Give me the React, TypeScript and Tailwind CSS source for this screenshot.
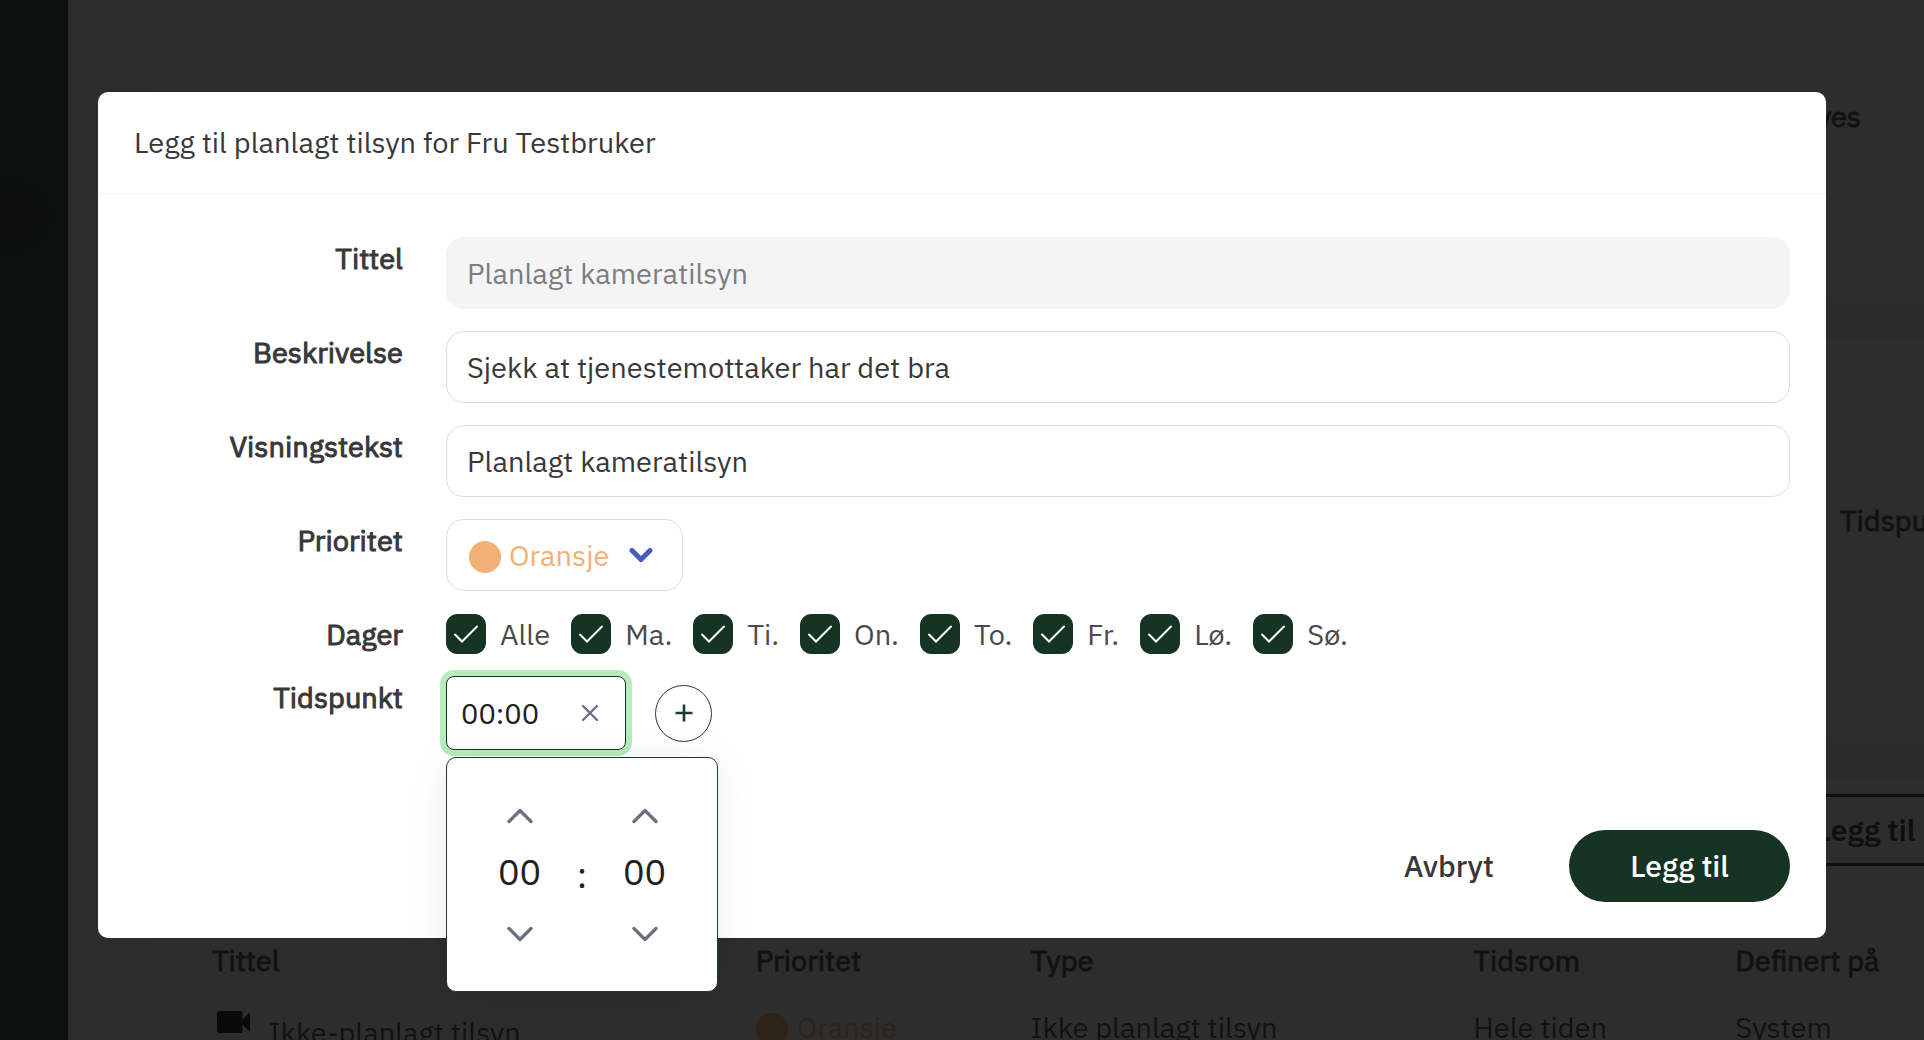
import { useState } from 'react';

interface Priority {
  name: string;
}

const PRIORITIES: Priority[] = [{ name: 'Oransje' }, { name: 'Rød' }, { name: 'Gul' }];
const DAYS = ['Alle', 'Ma.', 'Ti.', 'On.', 'To.', 'Fr.', 'Lø.', 'Sø.'];

const INPUT = 'block h-[72px] w-full rounded-[18px] px-5 text-[29px] outline-none';

// Thickened regular weight, keeps the regular letter widths.
const BOLD = 'font-normal [-webkit-text-stroke:1px_currentColor]';

function Chevron({ up = false }: { up?: boolean }) {
  return (
    <svg width="26" height="16" viewBox="0 0 26 16" fill="none" stroke="#6b7080" strokeWidth="3.3" strokeLinecap="round" strokeLinejoin="round" aria-hidden>
      <path d={up ? 'M2 13.5 13 2.5l11 11' : 'M2 2.5 13 13.5 24 2.5'} />
    </svg>
  );
}

function FormRow({ label, htmlFor, children }: { label: string; htmlFor?: string; children: React.ReactNode }) {
  return (
    <div className="grid grid-cols-[269px_1fr] gap-x-[43px]">
      <label htmlFor={htmlFor} className={`pt-[3px] text-right leading-9 ${BOLD}`}>
        {label}
      </label>
      <div>{children}</div>
    </div>
  );
}

function DayCheckbox({ day }: { day: string }) {
  const [checked, setChecked] = useState(true);
  return (
    <label className="flex items-center gap-3.5 text-[#4a4a4a]">
      <span className="grid size-10 place-items-center">
        <input
          type="checkbox"
          checked={checked}
          onChange={(e) => setChecked(e.target.checked)}
          className="col-start-1 row-start-1 size-10 appearance-none rounded-[11px] border border-[#153423] checked:bg-[#153423]"
        />
        <svg className="pointer-events-none col-start-1 row-start-1" width="26" height="20" viewBox="0 0 26 20" fill="none" stroke="#fff" strokeWidth="2" strokeLinecap="round" aria-hidden>
          <path d="M2 10.5 9 17.5 24 2.5" />
        </svg>
      </span>
      {day}
    </label>
  );
}

function Spinner({ label }: { label: string }) {
  return (
    <div role="group" className="flex w-[60px] flex-col items-center" aria-label={label}>
      <button type="button" aria-label={`${label} opp`} className="grid h-10 w-full place-items-center">
        <Chevron up />
      </button>
      <span className="pt-[18px] pb-6 text-[36px] leading-9">00</span>
      <button type="button" aria-label={`${label} ned`} className="grid h-10 w-full place-items-center">
        <Chevron />
      </button>
    </div>
  );
}

/** Hour/minute stepper that hangs below the time field. */
function TimePopup() {
  return (
    <div className="absolute top-[81px] left-0 flex h-[235px] w-[272px] items-start justify-center gap-[10px] rounded-[10px] border border-[#1b3b2e] bg-white pt-[38px] text-[#212121] shadow-[0_4px_40px_rgba(0,0,0,0.08)]">
      <Spinner label="Timer" />
      <span className="w-[45px] pt-[61px] text-center text-[36px] leading-9">:</span>
      <Spinner label="Minutter" />
    </div>
  );
}

function TimeField() {
  const [time, setTime] = useState('00:00');
  return (
    <div className="relative flex items-center gap-[29px]">
      <div className="flex h-[74px] w-[180px] items-center rounded-lg border border-[#153423] bg-white pr-[26px] pl-[14px] shadow-[0_0_0_6px_#b5edbd]">
        <input
          id="tidspunkt"
          value={time}
          onChange={(e) => setTime(e.target.value)}
          className="w-full min-w-0 text-[29px] text-[#212121] outline-none"
        />
        <button type="button" aria-label="Tøm" onClick={() => setTime('')}>
          <svg width="18" height="18" viewBox="0 0 18 18" stroke="#6b7080" strokeWidth="2.4" strokeLinecap="round" aria-hidden>
            <path d="M2 2 16 16M16 2 2 16" />
          </svg>
        </button>
      </div>
      <button type="button" aria-label="Legg til tidspunkt" className="grid size-[57px] place-items-center rounded-full border border-[#1b3b2e]">
        <svg width="18" height="18" viewBox="0 0 18 18" stroke="#1b3b2e" strokeWidth="2.6" aria-hidden>
          <path d="M9 0.5V17.5M0.5 9H17.5" />
        </svg>
      </button>
      <TimePopup />
    </div>
  );
}

/** Resident page, dimmed while the dialog is open. */
function PageBehind() {
  return (
    <div className="flex h-screen overflow-hidden bg-[#2d2d2d] text-[#121212]">
      <nav className="w-[68px] shrink-0 bg-[#0b110e] pt-[180px]">
        <div className="mr-[17px] h-[71px] rounded-r-[36px] bg-[#0b100e]" />
      </nav>
      <div className="w-[86px] shrink-0 bg-[#2c2c2c]" />
      <main className="flex min-w-0 flex-1 flex-col">
        <div className="h-[30px] shrink-0 border-b border-[#2a2a2a]" />
        <section className={`h-[267px] shrink-0 pt-[68px] pr-[63px] text-right ${BOLD}`}>Kreves</section>
        <div className="h-[43px] shrink-0 bg-[#2b2b2b]" />
        <div className="h-[101px] shrink-0 border-b border-[#2a2a2a]" />
        <section className={`h-[296px] shrink-0 overflow-hidden pt-[61px] ${BOLD}`}>
          <div className="flex justify-end">
            <span className="w-[84px]">Tidspunkt</span>
          </div>
        </section>
        <div className="h-[43px] shrink-0 bg-[#2b2b2b]" />
        <div className="flex h-[102px] shrink-0 items-start justify-end border-b border-[#2a2a2a] pt-[14px]">
          <button type="button" className="-mr-[52px] h-[72px] w-[221px] rounded-full border-3 border-[#0b110e] text-[30px] font-semibold text-[#0b110e]">
            Legg til
          </button>
        </div>
        <table className="w-full table-fixed text-left">
          <colgroup>
            <col className="w-[34%]" />
            <col className="w-[275px]" />
            <col className="w-[25%]" />
            <col className="w-[262px]" />
            <col />
          </colgroup>
          <thead>
            <tr className="h-[105px] align-bottom">
              <th className={`pb-[9px] pl-[58px] ${BOLD}`}>Tittel</th>
              <th className={`pb-[9px] ${BOLD}`}>Prioritet</th>
              <th className={`pb-[9px] ${BOLD}`}>Type</th>
              <th className={`pb-[9px] ${BOLD}`}>Tidsrom</th>
              <th className={`pb-[9px] ${BOLD}`}>Definert på</th>
            </tr>
          </thead>
          <tbody>
            <tr className="align-top">
              <td className="pt-[19px] pl-[58px]">
                <span className="flex items-start gap-[19px]">
                  <svg className="mt-1 ml-[5px]" width="33" height="24" viewBox="0 0 33 24" fill="#0a0a0a" aria-hidden>
                    <path d="M2.5 1H23a2.5 2.5 0 0 1 2.5 2.5V9.5L33 2V22L25.5 14.5V20.5A2.5 2.5 0 0 1 23 23H2.5A2.5 2.5 0 0 1 0 20.5V3.5A2.5 2.5 0 0 1 2.5 1Z" />
                  </svg>
                  <span className="pt-2">Ikke-planlagt tilsyn</span>
                </span>
              </td>
              <td className="pt-[22px] text-[#2e2319]">
                <span className="flex items-center gap-[9px]">
                  <span className="mt-1 size-8 rounded-full bg-[#2e2319]" />
                  Oransje
                </span>
              </td>
              <td className="pt-[22px]">Ikke planlagt tilsyn</td>
              <td className="pt-[22px]">Hele tiden</td>
              <td className="pt-[22px]">System</td>
            </tr>
          </tbody>
        </table>
      </main>
    </div>
  );
}

export default function App() {
  const [description, setDescription] = useState('Sjekk at tjenestemottaker har det bra');
  const [displayText, setDisplayText] = useState('Planlagt kameratilsyn');

  return (
    <div className="relative h-screen overflow-hidden font-['IBM_Plex_Sans',Roboto,sans-serif] text-[29px] leading-9 text-[#383838]">
      <PageBehind />

      <div className="absolute inset-0 flex items-start px-[98px] pt-[92px]">
        <div role="dialog" aria-labelledby="dialog-title" className="w-full rounded-[10px] bg-white">
          <header className="border-b border-[#f2f2f2] px-9 pt-8 pb-[33px]">
            <h2 id="dialog-title">Legg til planlagt tilsyn for Fru Testbruker</h2>
          </header>

          <form className="px-9 pt-[43px] pb-9">
            <div className="flex flex-col gap-[22px]">
              <FormRow label="Tittel" htmlFor="tittel">
                <input id="tittel" disabled value="Planlagt kameratilsyn" className={`${INPUT} border border-[#f4f4f4] bg-[#f4f4f4] text-[#7d7d7d]`} />
              </FormRow>
              <FormRow label="Beskrivelse" htmlFor="beskrivelse">
                <input
                  id="beskrivelse"
                  value={description}
                  onChange={(e) => setDescription(e.target.value)}
                  className={`${INPUT} border border-[#dcdcdc]`}
                />
              </FormRow>
              <FormRow label="Visningstekst" htmlFor="visningstekst">
                <input
                  id="visningstekst"
                  value={displayText}
                  onChange={(e) => setDisplayText(e.target.value)}
                  className={`${INPUT} border border-[#dcdcdc]`}
                />
              </FormRow>
              <FormRow label="Prioritet" htmlFor="prioritet">
                <div className="grid h-[72px] w-[237px] items-center rounded-[18px] border border-[#dcdcdc] text-[#f2b075]">
                  <select id="prioritet" className="col-start-1 row-start-1 h-full w-full appearance-none rounded-[18px] pl-[62px] outline-none">
                    {PRIORITIES.map((p) => (
                      <option key={p.name}>{p.name}</option>
                    ))}
                  </select>
                  <div className="pointer-events-none col-start-1 row-start-1 flex items-center justify-between pr-[29px] pl-[22px]">
                    <span className="mt-1 size-8 rounded-full bg-[#f2b075]" />
                    <svg width="24" height="16" viewBox="0 0 24 16" fill="none" stroke="#4a5bbf" strokeWidth="5" strokeLinecap="round" strokeLinejoin="round" aria-hidden>
                      <path d="M3 3.5 12 12.5 21 3.5" />
                    </svg>
                  </div>
                </div>
              </FormRow>
              <FormRow label="Dager">
                <div className="flex flex-wrap gap-[21px] pt-px">
                  {DAYS.map((day) => (
                    <DayCheckbox key={day} day={day} />
                  ))}
                </div>
              </FormRow>
              <FormRow label="Tidspunkt" htmlFor="tidspunkt">
                <TimeField />
              </FormRow>
            </div>

            <footer className="mt-20 flex items-center justify-end gap-[75px] text-[30px] font-medium">
              <button type="button">Avbryt</button>
              <button type="submit" className="h-[72px] w-[221px] rounded-full bg-[#153423] text-white">
                Legg til
              </button>
            </footer>
          </form>
        </div>
      </div>
    </div>
  );
}
